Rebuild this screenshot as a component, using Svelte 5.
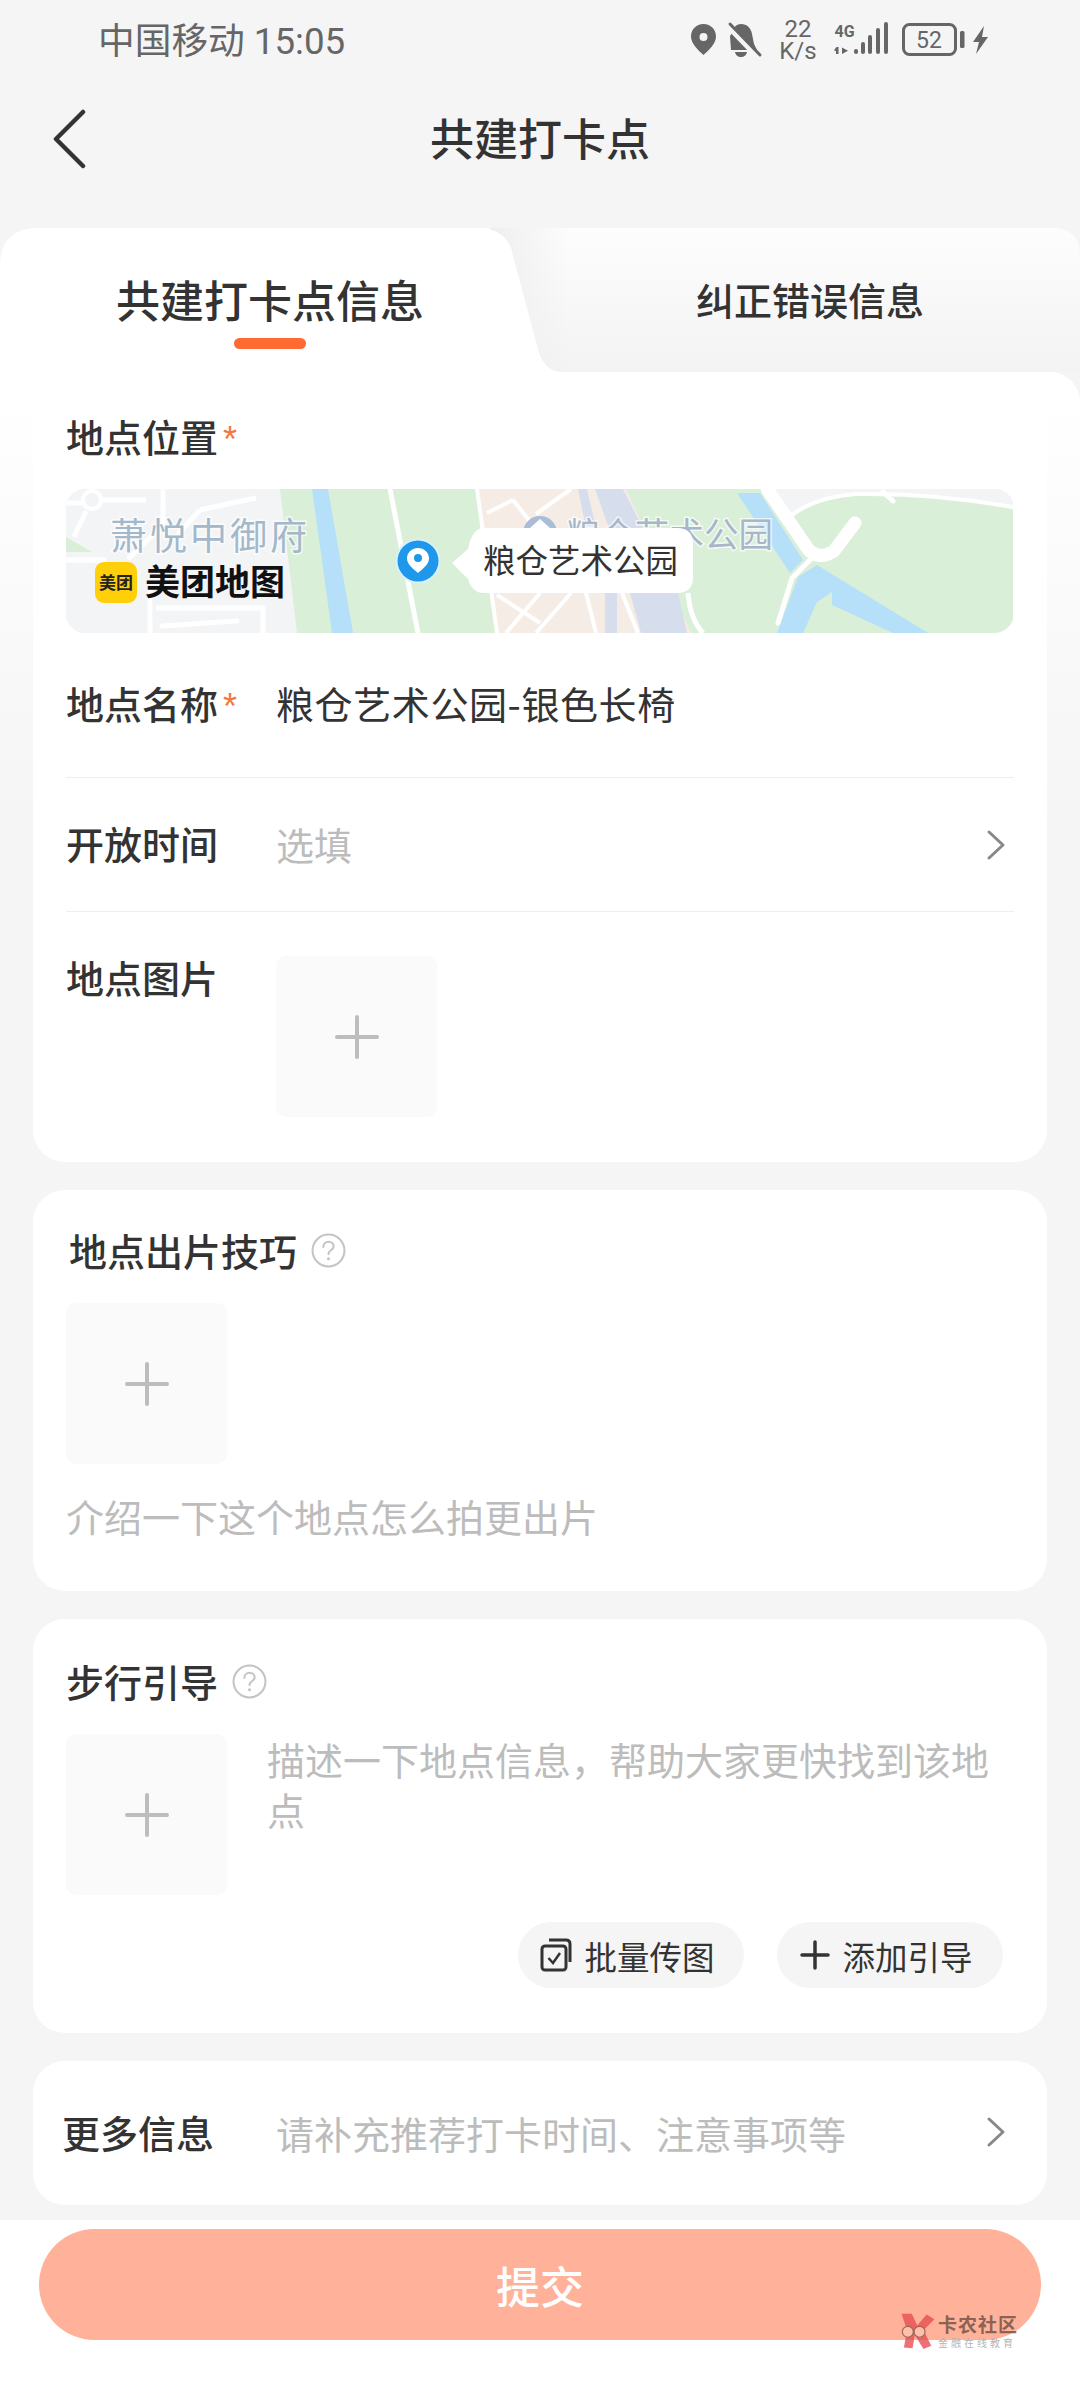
<script lang="ts">
	let title = '共建打卡点';
	let walkHint = '描述一下地点信息，帮助大家更快找到该地点';
</script>

<div class="page">
	<div class="status">
		<span class="carrier">中国移动 15:05</span>
		<svg class="status-icons" width="310" height="60" viewBox="0 -10 310 60" fill="#666">
			<path fill-rule="evenodd" d="M18.500 3C11 3 6 8.800 6 15.500 6 23 14 30 18.500 34 23 30 31 23 31 15.500 31 8.800 26 3 18.500 3Zm0 9a4 4 0 1 1 0 8 4 4 0 0 1 0-8Z" />
			<path d="M56 3c6 0 10 4 11 10l2 10 3 6H46l-1-14 2-3c1-5 4-9 9-9Zm-6 28h12c-.5 3-3 5-6 5s-5.500-2-6-5Z" />
			<path d="M43 5 73 36" stroke="#f5f5f5" stroke-width="6" />
			<path d="M45 3 75 34" stroke="#666" stroke-width="3" stroke-linecap="round" />
			<text x="113" y="16" class="net" text-anchor="middle">22</text>
			<text x="113" y="38" class="net" text-anchor="middle">K/s</text>
			<text x="149.500" y="15.500" class="net-g">4G</text>
			<path d="M153.500 33V26h-2l-2 2.500v1.500h1.500v3ZM157 26.500l6 3.300-6 3.200Z" />
			<g stroke="#666" stroke-width="4" stroke-linecap="round">
				<path d="M171 30v1M178 23v8M185 16v15M193 9v22M201 3v28" />
			</g>
			<rect x="218.500" y="3.500" width="52" height="30" rx="6" fill="none" stroke="#666" stroke-width="3" />
			<text x="244" y="27" class="batt" text-anchor="middle">52</text>
			<rect x="275" y="10" width="4.500" height="17" rx="1.500" />
			<path d="M299 5 288 21h6l-3 12 12-17h-6Z" />
		</svg>
	</div>

	<header class="nav">
		<svg class="back" width="36" height="60" viewBox="0 0 36 60">
			<path d="M32 3 5 30l27 27" fill="none" stroke="#333" stroke-width="4.500" stroke-linecap="round" stroke-linejoin="round" />
		</svg>
		<h1>{title}</h1>
	</header>

	<div class="tabs">
		<svg class="tab-shape" width="1080" height="144" viewBox="0 0 1080 144">
			<defs>
				<linearGradient id="tabFade" x1="0" y1="0" x2="0" y2="1">
					<stop offset="0" stop-color="#fdfdfd" />
					<stop offset="1" stop-color="#f3f3f3" />
				</linearGradient>
				<linearGradient id="tabEdge" x1="0" y1="0" x2="1" y2="0">
					<stop offset="0" stop-color="#eee" />
					<stop offset="1" stop-color="#eee" stop-opacity="0" />
				</linearGradient>
			</defs>
			<path d="M470 0H1052Q1080 0 1080 28V144H470Z" fill="url(#tabFade)" />
			<rect x="490" y="0" width="80" height="144" fill="url(#tabEdge)" />
			<path d="M38 0H478Q503 0 511 20L539 125Q546 144 562 144H0V38Q0 0 38 0Z" fill="#fff" />
		</svg>
		<div class="tab active">
			<span>共建打卡点信息</span>
			<i></i>
		</div>
		<div class="tab">纠正错误信息</div>
	</div>

	<main class="form">
		<section class="card first">
			<div class="label loc">地点位置<b>*</b></div>
			<div class="map">
				<svg width="947" height="144" viewBox="0 0 947 144">
					<rect width="947" height="144" fill="#d9efd7" />
					<!-- left blocks -->
					<path d="M0 0H214L231 144H0Z" fill="#f3f4f6" />
					<path d="M0 48 26 63H0Z" fill="#d9efd7" />
					<g fill="none" stroke="#fff" stroke-width="5">
						<circle cx="26" cy="11" r="9" stroke-width="4" />
						<path d="M0 14H16M36 11H80M20 22 8 48M97 0V36M97 36 62 70M134 21 190 9M134 21 112 45M0 71H40M84 100V144M90 119H197V144" />
						<path d="M96 137 171 132" stroke-linecap="round" />
					</g>
					<!-- river and path -->
					<path d="M246 0H262L287 144H266Z" fill="#b6dffa" />
					<path d="M324 0 352 144" stroke="#fff" stroke-width="5" />
					<!-- park blocks -->
					<path d="M411 0H560L625 144H431Z" fill="#f5ece6" />
					<path d="M529 0H557L580 45H545Z" fill="#d6dded" />
					<path d="M512 0H521L530 39H520Z" fill="#d6dded" />
					<path d="M564 104H612L621 144H575Z" fill="#d6dded" />
					<path d="M539 104H551V144H539Z" fill="#d6dded" />
					<g fill="none" stroke="#fff" stroke-width="4">
						<path d="M411 0 431 144M421 24 447 11M447 11 470 40M505 0 470 25M431 106 474 134M474 104 440 144M505 104 470 144M520 104 530 144M556 104 572 144" />
						<path d="M622 104Q624 130 637 144" stroke-width="5" />
					</g>
					<!-- canal, right side -->
					<path d="M671 4H694L737 71 724 84Z" fill="#b6dffa" />
					<path d="M751 76 862 144H827L766 116V103L751 113 737 144H711L732 88Z" fill="#b6dffa" />
					<path d="M701 0H947V18Q870 4 790 5 750 8 726 26Z" fill="#f3f4f6" />
					<g fill="none" stroke="#fff" stroke-linecap="round">
						<path d="M701 0 742 60Q752 72 768 62L789 34" stroke-width="13" />
						<path d="M747 68 726 89 712 134" stroke-width="5" />
						<path d="M726 26Q750 8 790 5 870 4 947 18" stroke-width="4" />
						<path d="M817 3 827 12" stroke-width="5" />
					</g>
					<!-- labels -->
					<circle cx="474" cy="44" r="17" fill="#a9bdd4" />
					<path d="M464 39 474 30 484 39Z" fill="#fff" />
					<text x="44" y="61" class="poi">萧悦中御府</text>
					<text x="500" y="58" class="poi small">粮仓艺术公园</text>
					<rect x="29" y="73" width="42" height="41" rx="9" fill="#ffcf0a" />
					<text x="50" y="100" class="mt-logo" text-anchor="middle">美团</text>
					<text x="79" y="106" class="mt-name">美团地图</text>
					<path d="M418 39H611Q627 39 627 55V88Q627 104 611 104H418Q406 104 402 90L386 74 402 60Q406 39 418 39Z" fill="#fff" />
					<text x="417" y="84" class="bubble">粮仓艺术公园</text>
					<circle cx="352" cy="72" r="22.500" fill="#d9f1fb" />
					<circle cx="352" cy="72" r="20.500" fill="#1f97ea" />
					<path d="M352 59c-6 0-11 4.500-11 10.500 0 6 6.500 10.500 11 14.500 4.500-4 11-8.500 11-14.500 0-6-5-10.500-11-10.500Z" fill="#fff" />
					<circle cx="352" cy="69" r="4" fill="#1f97ea" />
				</svg>
			</div>
			<div class="row name">
				<div class="label">地点名称<b>*</b></div>
				<div class="value">粮仓艺术公园-银色长椅</div>
			</div>
			<div class="row time">
				<div class="label">开放时间</div>
				<div class="hint">选填</div>
				<svg class="chev" width="20" height="32" viewBox="0 0 20 32"><path d="M3 3 17 16 3 29" fill="none" stroke="#888" stroke-width="3" stroke-linecap="round" stroke-linejoin="round" /></svg>
			</div>
			<div class="row photo">
				<div class="label">地点图片</div>
				<div class="add">
					<svg width="44" height="44" viewBox="0 0 44 44"><path d="M22 2V42M2 22H42" stroke="#bdbdbd" stroke-width="4" stroke-linecap="round" /></svg>
				</div>
			</div>
		</section>

		<section class="card tips">
			<div class="title shift">
				<span>地点出片技巧</span>
				<svg width="35" height="35" viewBox="0 0 34 34"><circle cx="17" cy="17" r="15.500" fill="none" stroke="#c4c4c4" stroke-width="2" /><path d="M12 13.500c0-3 2.200-5 5-5s5 2 5 4.500c0 3.500-5 3.500-5 7.500" fill="none" stroke="#c4c4c4" stroke-width="2" stroke-linecap="round" /><circle cx="17" cy="25" r="1.500" fill="#c4c4c4" /></svg>
			</div>
			<div class="add">
				<svg width="44" height="44" viewBox="0 0 44 44"><path d="M22 2V42M2 22H42" stroke="#bdbdbd" stroke-width="4" stroke-linecap="round" /></svg>
			</div>
			<div class="hint tip-hint">介绍一下这个地点怎么拍更出片</div>
		</section>

		<section class="card walk">
			<div class="title">
				<span>步行引导</span>
				<svg width="35" height="35" viewBox="0 0 34 34"><circle cx="17" cy="17" r="15.500" fill="none" stroke="#c4c4c4" stroke-width="2" /><path d="M12 13.500c0-3 2.200-5 5-5s5 2 5 4.500c0 3.500-5 3.500-5 7.500" fill="none" stroke="#c4c4c4" stroke-width="2" stroke-linecap="round" /><circle cx="17" cy="25" r="1.500" fill="#c4c4c4" /></svg>
			</div>
			<div class="walk-body">
				<div class="add">
					<svg width="44" height="44" viewBox="0 0 44 44"><path d="M22 2V42M2 22H42" stroke="#bdbdbd" stroke-width="4" stroke-linecap="round" /></svg>
				</div>
				<div class="hint walk-hint">{walkHint}</div>
			</div>
			<div class="actions">
				<div class="pill">
					<svg width="32" height="34" viewBox="0 0 32 34" fill="none" stroke="#333" stroke-width="3"><rect x="2" y="8" width="24" height="24" rx="3" /><path d="M9 2H26Q30 2 30 6V24" /><path d="M8.500 20 13 25 20 15" stroke-width="2.500" /></svg>
					批量传图
				</div>
				<div class="pill">
					<svg width="30" height="30" viewBox="0 0 30 30"><path d="M15 2V28M2 15H28" stroke="#333" stroke-width="3.500" stroke-linecap="round" /></svg>
					添加引导
				</div>
			</div>
		</section>

		<section class="card more">
			<div class="label">更多信息</div>
			<div class="hint">请补充推荐打卡时间、注意事项等</div>
			<svg class="chev" width="20" height="32" viewBox="0 0 20 32"><path d="M3 3 17 16 3 29" fill="none" stroke="#888" stroke-width="3" stroke-linecap="round" stroke-linejoin="round" /></svg>
		</section>
	</main>

	<footer class="foot">
		<div class="submit">提交</div>
	</footer>

	<div class="watermark">
		<svg width="36" height="36" viewBox="0 0 46 46">
			<path d="M2 1H15L22 16 34 2 44 8 30 22 40 42 30 46 19 28 16 45 5 44 9 22Z" fill="#e8484f" opacity=".9" />
			<circle cx="10" cy="24" r="7" fill="#ffc3ad" stroke="#8a5a50" stroke-width="1.500" />
			<circle cx="25" cy="24" r="7" fill="#ffc3ad" stroke="#8a5a50" stroke-width="1.500" />
		</svg>
		<div class="wm-text">
			<span class="wm-a">卡农社区</span>
			<span class="wm-b">金融在线教育</span>
		</div>
	</div>
</div>

<style>
	:global(body) {
		margin: 0;
		background: #fff;
	}

	.page {
		position: relative;
		width: 1080px;
		height: 2400px;
		overflow: hidden;
		background: #f5f5f5;
		font-family: 'Noto Sans CJK SC', 'Noto Sans', sans-serif;
		color: #333;
	}

	.status {
		height: 82px;
		display: flex;
		align-items: center;
		justify-content: space-between;
		padding: 0 85px 0 98px;
	}

	.carrier {
		font-family: Roboto, 'Noto Sans CJK SC', sans-serif;
		font-size: 36.700px;
		color: #666;
		margin-top: -6px;
	}

	.status-icons {
		display: block;
	}

	.net {
		font: 400 24px Roboto, sans-serif;
	}

	.net-g {
		font: 700 16px Roboto, sans-serif;
	}

	.batt {
		font: 400 23px Roboto, sans-serif;
	}

	.nav {
		position: relative;
		height: 112px;
		display: flex;
		align-items: center;
		justify-content: center;
	}

	.back {
		position: absolute;
		left: 51px;
		top: 27px;
	}

	.nav h1 {
		margin: -2px 0 0;
		font-size: 44px;
		font-weight: 500;
		line-height: 60px;
	}

	.tabs {
		position: relative;
		margin-top: 34px;
		height: 144px;
		display: flex;
	}

	.tab-shape {
		position: absolute;
		left: 0;
		top: 0;
		display: block;
	}

	.tab {
		position: relative;
		flex: 1;
		padding-top: 43px;
		text-align: center;
		font-size: 38px;
		font-weight: 500;
		line-height: 56px;
	}

	.tab.active {
		flex: 0 0 540px;
		font-size: 44px;
		display: flex;
		flex-direction: column;
		align-items: center;
	}

	.tab.active i {
		display: block;
		width: 72px;
		height: 11px;
		margin-top: 11px;
		border-radius: 6px;
		background: #ff6a33;
	}

	.form {
		padding: 0 33px;
		height: 1848px;
		background: linear-gradient(#fff 20px, #f5f5f5 450px);
		border-top-right-radius: 30px;
		box-sizing: border-box;
		display: flex;
		flex-direction: column;
	}

	.card {
		flex: none;
		background: #fff;
		border-radius: 32px;
		padding: 0 33px;
		box-sizing: border-box;
		margin-bottom: 28px;
	}

	.label {
		font-size: 38px;
		font-weight: 500;
		line-height: 56px;
		flex: 0 0 210px;
		color: #333;
	}

	.label b {
		color: #f3773f;
		font-weight: 500;
		margin-left: 5px;
		font-family: 'Liberation Sans', sans-serif;
		font-size: 36px;
		line-height: 0;
	}

	.first {
		height: 790px;
		padding-top: 36px;
	}

	.loc {
		margin-bottom: 25px;
	}

	.map {
		height: 144px;
		border-radius: 20px;
		overflow: hidden;
	}

	.map svg {
		display: block;
	}

	.poi {
		font-size: 37px;
		letter-spacing: 3px;
		fill: #a3b8ca;
		stroke: #ffffffb0;
		stroke-width: 3px;
		paint-order: stroke;
	}

	.poi.small {
		font-size: 34.500px;
		letter-spacing: 0;
		fill: #a7b6c9;
	}

	.mt-logo {
		font-size: 17px;
		font-weight: 700;
		fill: #222;
	}

	.mt-name {
		font-size: 35px;
		font-weight: 700;
		fill: #111;
	}

	.bubble {
		font-size: 32.500px;
		fill: #333;
	}

	.row {
		display: flex;
		align-items: center;
		box-sizing: border-box;
	}

	.value {
		font-size: 38px;
		letter-spacing: 0.6px;
		color: #333;
	}

	.hint {
		font-size: 38px;
		color: #bcbcbc;
		flex: 1;
	}

	.chev {
		display: block;
		flex: none;
		margin-right: 8px;
	}

	.row.name {
		height: 145px;
		padding-bottom: 5px;
		border-bottom: 1px solid #eee;
	}

	.row.time {
		height: 134px;
		border-bottom: 1px solid #eee;
	}

	.row.time .label,
	.row.time .hint {
		padding-bottom: 3px;
	}

	.row.photo {
		align-items: flex-start;
		padding-top: 44px;
	}

	.row.photo .label {
		margin-top: -7px;
	}

	.add {
		width: 161px;
		height: 161px;
		flex: none;
		border-radius: 10px;
		background: #fafafa;
		display: flex;
		align-items: center;
		justify-content: center;
	}

	.title {
		display: flex;
		align-items: center;
		gap: 14px;
		font-size: 38px;
		font-weight: 500;
		line-height: 56px;
	}

	.title.shift {
		padding-left: 3px;
	}

	.tips {
		height: 401px;
		padding-top: 32px;
	}

	.tips .add {
		margin-top: 25px;
	}

	.tip-hint {
		margin-top: 24px;
		line-height: 56px;
	}

	.walk {
		height: 414px;
		padding-top: 34px;
	}

	.walk-body {
		display: flex;
		gap: 40px;
		margin-top: 25px;
	}

	.walk-hint {
		line-height: 50px;
		padding-right: 10px;
	}

	.actions {
		display: flex;
		justify-content: flex-end;
		gap: 33px;
		margin-top: 27px;
		padding-right: 11px;
	}

	.pill {
		width: 226px;
		height: 66px;
		box-sizing: border-box;
		padding-right: 7px;
		border-radius: 33px;
		background: #f5f5f5;
		display: flex;
		align-items: center;
		justify-content: center;
		gap: 12px;
		font-size: 32.500px;
		color: #333;
	}

	.more {
		height: 144px;
		display: flex;
		align-items: center;
		padding: 0 33px 2px 29px;
	}

	.more .label {
		flex: 0 0 214px;
	}

	.foot {
		position: absolute;
		left: 0;
		right: 0;
		top: 2220px;
		bottom: 0;
		background: #fff;
		padding: 9px 39px 0;
	}

	.submit {
		height: 111px;
		border-radius: 56px;
		background: #ffb299;
		color: #fff;
		font-size: 44px;
		font-weight: 500;
		display: flex;
		align-items: center;
		justify-content: center;
	}

	.watermark {
		position: absolute;
		left: 900px;
		top: 2313px;
		display: flex;
		gap: 2px;
		opacity: 0.85;
	}

	.wm-text {
		display: flex;
		flex-direction: column;
		line-height: 1;
	}

	.wm-a {
		font-size: 19px;
		font-weight: 700;
		color: #7a5549;
		letter-spacing: 1px;
		margin-top: 1px;
	}

	.wm-b {
		font-size: 10px;
		color: #aaa;
		letter-spacing: 3px;
		margin-top: 5px;
	}
</style>
